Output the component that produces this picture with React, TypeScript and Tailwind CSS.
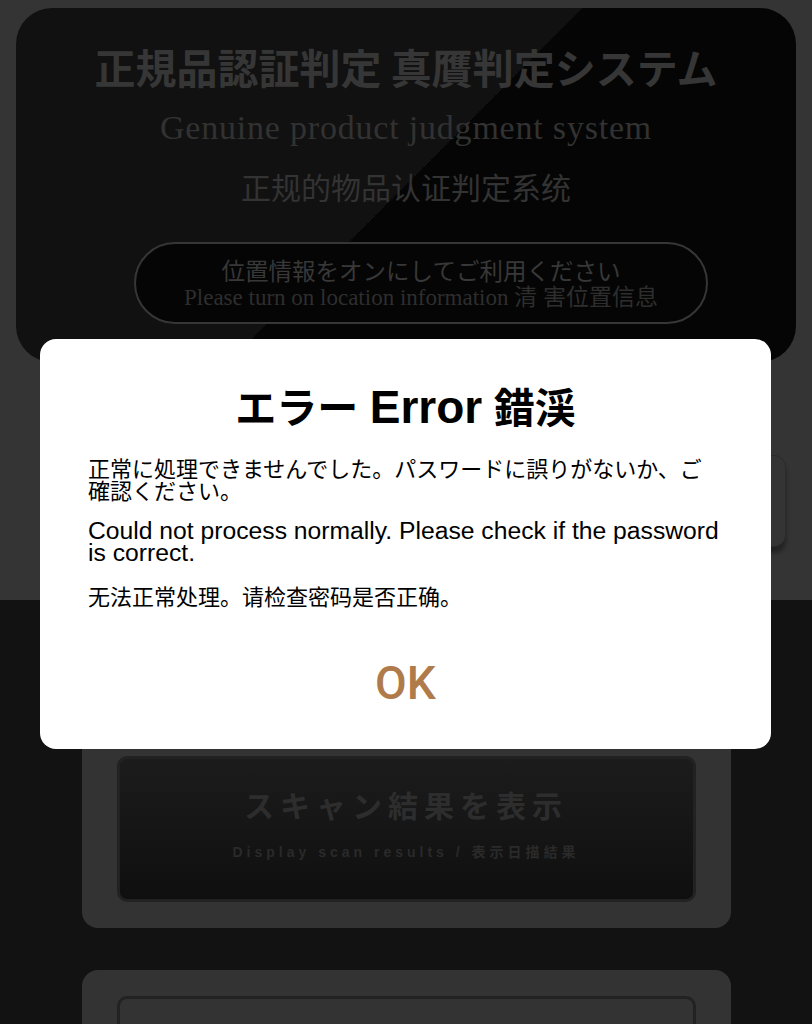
export default function App() {
  return (
    <div className="relative h-[1024px] overflow-hidden bg-[#131213] [font-family:'Liberation_Sans','Noto_Sans_CJK_JP',sans-serif]">
      {/* top section (dimmed) */}
      <section className="h-[600px] bg-[#343434] pt-2">
        <div className="mx-4 h-[354px] rounded-[36px] bg-[linear-gradient(135deg,#111111_50%,#050505_50%)] pt-[34px] flex flex-col items-center">
          <h1 className="text-[41px] leading-[48px] font-bold text-[#363636] [font-family:'Noto_Sans_CJK_JP',serif]">
            正規品認証判定 真贋判定システム
          </h1>
          <p className="mt-[18px] text-[34px] leading-[40px] tracking-[0.8px] text-[#323232] [font-family:'Liberation_Serif',serif]">
            Genuine product judgment system
          </p>
          <p className="mt-5 text-[30px] leading-[36px] text-[#333333] [font-family:'Noto_Sans_CJK_SC',serif]">
            正规的物品认证判定系统
          </p>
          <div className="mt-[38px] ml-[30px] flex h-[82px] w-[574px] flex-col items-center justify-center gap-[3px] rounded-full border-2 border-[#363636] bg-[#050505]">
            <span className="text-[23.5px] leading-[26px] text-[#383838] [font-family:'Noto_Sans_CJK_JP',sans-serif]">
              位置情報をオンにしてご利用ください
            </span>
            <span className="text-[23px] leading-[24px] text-[#2e2e2e] [font-family:'Liberation_Serif','Noto_Sans_CJK_SC',serif]">
              Please turn on location information 清 害位置信息
            </span>
          </div>
        </div>
        <div className="ml-[60px] mr-[26px] mt-[93px] h-[92px] rounded-xl border border-[#2b2b2b] bg-[#343434] shadow-[0_6px_4px_rgba(0,0,0,0.35)]" />
      </section>

      {/* lower section */}
      <section className="flex flex-col items-center gap-[42px] pt-[130px]">
        <div className="w-[649px] rounded-2xl bg-[#333333] px-[35px] pt-[26px] pb-[26px]">
          <div className="flex h-[146px] flex-col items-center pt-[27px] rounded-[10px] border-[3px] border-[#222222] bg-[linear-gradient(180deg,#1c1c1c,#0f0f0f)]">
            <span className="text-[30px] leading-[36px] font-bold tracking-[6px] text-[#2d2d2d] [font-family:'Noto_Sans_CJK_JP',sans-serif]">
              スキャン結果を表示
            </span>
            <span className="mt-[20px] text-[14px] leading-[20px] font-bold tracking-[4px] text-[#2a2a2a] [font-family:'Liberation_Sans','Noto_Sans_CJK_SC',sans-serif]">
              Display scan results / 表示日描結果
            </span>
          </div>
        </div>
        <div className="w-[649px] rounded-2xl bg-[#333333] px-[35px] pt-[26px] pb-[26px]">
          <div className="h-[146px] rounded-[10px] border-[3px] border-[#222222] bg-[#333333]" />
        </div>
      </section>

      {/* error dialog */}
      <div className="absolute left-[40px] top-[339px] flex h-[410px] w-[731px] flex-col rounded-2xl bg-white px-12 pt-[44px]">
        <h2 className="text-center text-[41px] leading-[48px] font-bold text-black [font-family:'Liberation_Sans','Noto_Sans_CJK_JP',sans-serif]">
          エラー <span className="text-[46px]">Error</span> 錯渓
        </h2>
        <div className="mt-[23px] text-black">
          <p className="text-[22px] leading-[22px] [font-family:'Noto_Sans_CJK_JP',sans-serif]">
            正常に処理できませんでした。パスワードに誤りがないか、ご確認ください。
          </p>
          <p className="mt-5 text-[24.7px] leading-[22px] [font-family:'Liberation_Sans',sans-serif]">
            Could not process normally. Please check if the password is correct.
          </p>
          <p className="mt-5 text-[22px] leading-[22px] [font-family:'Noto_Sans_CJK_SC',sans-serif]">
            无法正常处理。请检查密码是否正确。
          </p>
        </div>
        <div className="mt-auto mb-[42px] text-center text-[46px] leading-[48px] font-medium text-[#b07b4b] [font-family:Roboto,sans-serif]">
          OK
        </div>
      </div>
    </div>
  );
}
